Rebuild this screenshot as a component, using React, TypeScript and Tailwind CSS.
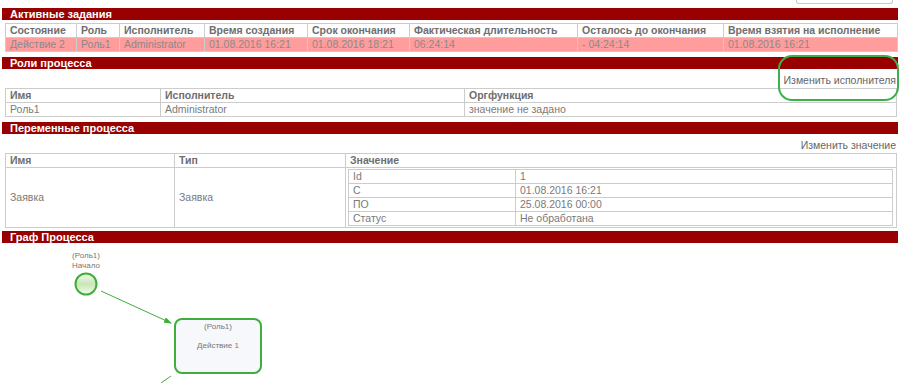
const bar = 'h-[12px] bg-[#990000] text-white font-bold text-[11px] leading-[12px] pl-[8px]'
const th = 'border border-[#cccccc] h-[13px] p-0 pl-[4px] text-left font-bold text-[#6e6e6e] text-[10.5px] leading-[13px] whitespace-nowrap overflow-hidden'
const td = 'border border-[#cccccc] h-[13px] p-0 pl-[4px] text-left text-[#7a7a7a] text-[10.5px] leading-[13px] whitespace-nowrap overflow-hidden'

const activeCols = [
  ['Состояние', 71], ['Роль', 43], ['Исполнитель', 85], ['Время создания', 103],
  ['Срок окончания', 102], ['Фактическая длительность', 168], ['Осталось до окончания', 146], ['Время взятия на исполнение', 174],
] as const
const activeRow = ['Действие 2', 'Роль1', 'Administrator', '01.08.2016 16:21', '01.08.2016 18:21', '06:24:14', '- 04:24:14', '01.08.2016 16:21']

const vars = [
  ['Id', '1'], ['С', '01.08.2016 16:21'], ['ПО', '25.08.2016 00:00'], ['Статус', 'Не обработана'],
]

const svgFont = 'Liberation Sans, Arial, sans-serif'

function ProcessGraph() {
  return (
    <svg width="400" height="140" className="block ml-[-2px]">
      <defs>
        <linearGradient id="startFill" x1="0" y1="0" x2="0" y2="1">
          <stop offset="0" stopColor="#f4fbef" />
          <stop offset="0.5" stopColor="#c9e6b6" />
          <stop offset="1" stopColor="#f4fbef" />
        </linearGradient>
        <marker id="arrow" markerWidth="8" markerHeight="6" refX="7" refY="3" orient="auto" markerUnits="userSpaceOnUse">
          <path d="M0,0 L8,3 L0,6 z" fill="#3fae3a" />
        </marker>
      </defs>
      <text x="86" y="15" textAnchor="middle" fontSize="8" fill="#777" fontFamily={svgFont}>(Роль1)</text>
      <text x="86" y="25" textAnchor="middle" fontSize="8" fill="#777" fontFamily={svgFont}>Начало</text>
      <circle cx="86" cy="41" r="10.5" fill="url(#startFill)" stroke="#3fae3a" strokeWidth="2" />
      <line x1="101" y1="48" x2="171" y2="80" stroke="#3fae3a" strokeWidth="1" markerEnd="url(#arrow)" />
      <rect x="175" y="76" width="86" height="54" rx="7" fill="#f6f8fb" stroke="#3fae3a" strokeWidth="2" />
      <text x="218" y="86" textAnchor="middle" fontSize="8" fill="#777" fontFamily={svgFont}>(Роль1)</text>
      <text x="218" y="105" textAnchor="middle" fontSize="8" fill="#777" fontFamily={svgFont}>Действие 1</text>
      <line x1="171" y1="133" x2="161" y2="140" stroke="#3fae3a" strokeWidth="1" />
    </svg>
  )
}

export default function App() {
  return (
    <div className="relative w-[900px] h-[383px] overflow-hidden bg-white px-[2px] font-['Liberation_Sans',Arial,sans-serif]">
      <div className="flex justify-end h-[4px]">
        <div className="w-[97px] h-[4px] border border-t-0 border-[#c8c8c8] rounded-b-[3px] mr-[5px]" />
      </div>

      <div className={`mt-[4px] ${bar}`}>Активные задания</div>
      <table className="mt-[3px] ml-[3px] w-[892px] table-fixed border-collapse">
        <colgroup>{activeCols.map(([, w], i) => <col key={i} style={{ width: w }} />)}</colgroup>
        <thead>
          <tr>{activeCols.map(([name]) => <th key={name} className={th}>{name}</th>)}</tr>
        </thead>
        <tbody>
          <tr className="bg-[#ff9c9c]">
            {activeRow.map((v, i) => <td key={i} className={`${td} text-[#8a8a8a]`}>{v}</td>)}
          </tr>
        </tbody>
      </table>

      <div className={`mt-[5px] ${bar}`}>Роли процесса</div>
      <div className="mt-[5px] h-[13px] text-right pr-[2px] text-[10.5px] leading-[13px] text-[#666]">Изменить исполнителя</div>
      <table className="mt-[1px] ml-[3px] w-[892px] table-fixed border-collapse">
        <colgroup><col className="w-[155px]" /><col className="w-[304px]" /><col /></colgroup>
        <thead>
          <tr><th className={th}>Имя</th><th className={th}>Исполнитель</th><th className={th}>Оргфункция</th></tr>
        </thead>
        <tbody>
          <tr><td className={td}>Роль1</td><td className={td}>Administrator</td><td className={td}>значение не задано</td></tr>
        </tbody>
      </table>

      <div className={`mt-[5px] ${bar}`}>Переменные процесса</div>
      <div className="mt-[5px] h-[13px] text-right pr-[2px] text-[10.5px] leading-[13px] text-[#666]">Изменить значение</div>
      <table className="mt-[1px] ml-[3px] w-[892px] table-fixed border-collapse">
        <colgroup><col className="w-[169px]" /><col className="w-[171px]" /><col /></colgroup>
        <thead>
          <tr><th className={th}>Имя</th><th className={th}>Тип</th><th className={th}>Значение</th></tr>
        </thead>
        <tbody>
          <tr>
            <td className={td}>Заявка</td>
            <td className={td}>Заявка</td>
            <td className="border border-[#cccccc] pl-[2px] pr-[3px] py-[1px]">
              <table className="w-full table-fixed border-collapse">
                <colgroup><col className="w-[167px]" /><col /></colgroup>
                <tbody>
                  {vars.map(([k, v]) => (
                    <tr key={k}><td className={td}>{k}</td><td className={td}>{v}</td></tr>
                  ))}
                </tbody>
              </table>
            </td>
          </tr>
        </tbody>
      </table>

      <div className={`mt-[3px] ${bar}`}>Граф Процесса</div>
      <ProcessGraph />

      <div className="absolute left-[778px] top-[55px] w-[121px] h-[46px] rounded-[14px] border-2 border-[#3cb04a] pointer-events-none" />
    </div>
  )
}
